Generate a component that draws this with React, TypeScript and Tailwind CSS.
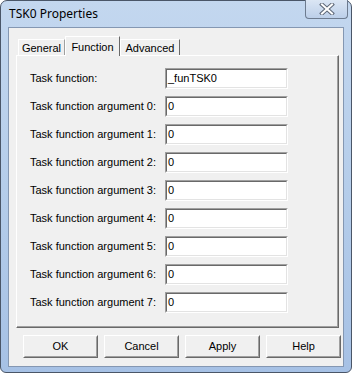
import React from "react";

const rows = [
  { label: "Task function:", value: "_funTSK0" },
  { label: "Task function argument 0:", value: "0" },
  { label: "Task function argument 1:", value: "0" },
  { label: "Task function argument 2:", value: "0" },
  { label: "Task function argument 3:", value: "0" },
  { label: "Task function argument 4:", value: "0" },
  { label: "Task function argument 5:", value: "0" },
  { label: "Task function argument 6:", value: "0" },
  { label: "Task function argument 7:", value: "0" },
];

function Field({ value }: { value: string }) {
  return (
    <div className="w-[123px] h-[21px] border border-t-[#a0a0a0] border-l-[#a0a0a0] border-b-white border-r-white">
      <div className="h-full border border-t-[#696969] border-l-[#696969] border-b-[#e3e3e3] border-r-[#e3e3e3] bg-white flex items-center pl-[1px] text-[11px] leading-none text-black">
        {value}
      </div>
    </div>
  );
}

function Button({ label }: { label: string }) {
  return (
    <div className="w-[75px] h-[23px] border border-t-white border-l-white border-b-[#696969] border-r-[#696969]">
      <div className="h-full border border-t-[#f0f0f0] border-l-[#f0f0f0] border-b-[#a0a0a0] border-r-[#a0a0a0] bg-[#f0f0f0] flex items-center justify-center text-[11px] text-black">
        {label}
      </div>
    </div>
  );
}

export default function App() {
  return (
    <div className="w-[352px] h-[377px] bg-white" style={{ fontFamily: '"Liberation Sans", Arial, sans-serif' }}>
      <div className="relative h-[373px] flex flex-col rounded-t-[7px] rounded-b-[6px] border border-[#4a5668] bg-gradient-to-b from-[#c3d7ef] via-[#b5cdea] to-[#a6c1e5] px-[7px] pb-[5px]">
        {/* title bar */}
        <div className="h-[26px] flex items-center pl-[1px]">
          <span className="text-[12px] text-black" style={{ fontFamily: '"Noto Sans", "Open Sans", sans-serif' }}>
            TSK0 Properties
          </span>
        </div>
        <div className="absolute right-[3px] -top-px w-[43px] h-[19px] rounded-b-[4px] border border-[#6d7b8f] border-t-0 bg-gradient-to-b from-[#dbe6f4] to-[#bccfe9] flex items-center justify-center">
          <svg width="16" height="12" viewBox="0 0 16 12">
            <path d="M3 1.5 L13 10.5 M13 1.5 L3 10.5" stroke="#5d6777" strokeWidth="4" strokeLinecap="square" fill="none" />
            <path d="M3 1.5 L13 10.5 M13 1.5 L3 10.5" stroke="#ffffff" strokeWidth="2" strokeLinecap="square" fill="none" />
          </svg>
        </div>

        {/* client area */}
        <div className="flex-1 flex flex-col border border-[#8497b2] bg-[#f0f0f0] text-black">
          <div className="pl-[7px] pr-[4px] pt-[8px]">
            <div className="flex items-end h-[19px] pl-[2px] text-[11px]">
              <div className="w-[47px] h-[16px] border border-b-0 border-t-white border-l-white border-r-[#a0a0a0] flex items-center justify-center pt-[1px]">
                General
              </div>
              <div className="relative z-10 w-[55px] h-[20px] -mb-px border border-b-0 border-t-white border-l-white border-r-[#696969] bg-[#f0f0f0] flex items-start justify-center pt-[2px]">
                Function
              </div>
              <div className="w-[60px] h-[16px] border border-b-0 border-t-white border-l-white border-r-[#696969] flex items-center justify-center pt-[1px]">
                Advanced
              </div>
            </div>
            <div className="h-[273px] border border-t-white border-l-white border-b-[#696969] border-r-[#696969]">
              <div className="h-full border-r border-b border-[#a0a0a0] pl-[13px] pt-[12px] flex flex-col gap-[7px]">
                {rows.map((r) => (
                  <div key={r.label} className="flex items-center">
                    <div className="w-[135px] text-[11px]">{r.label}</div>
                    <Field value={r.value} />
                  </div>
                ))}
              </div>
            </div>
          </div>
          <div className="flex gap-[6px] pl-[14px] pt-[7px]">
            <Button label="OK" />
            <Button label="Cancel" />
            <Button label="Apply" />
            <Button label="Help" />
          </div>
        </div>
      </div>
    </div>
  );
}
